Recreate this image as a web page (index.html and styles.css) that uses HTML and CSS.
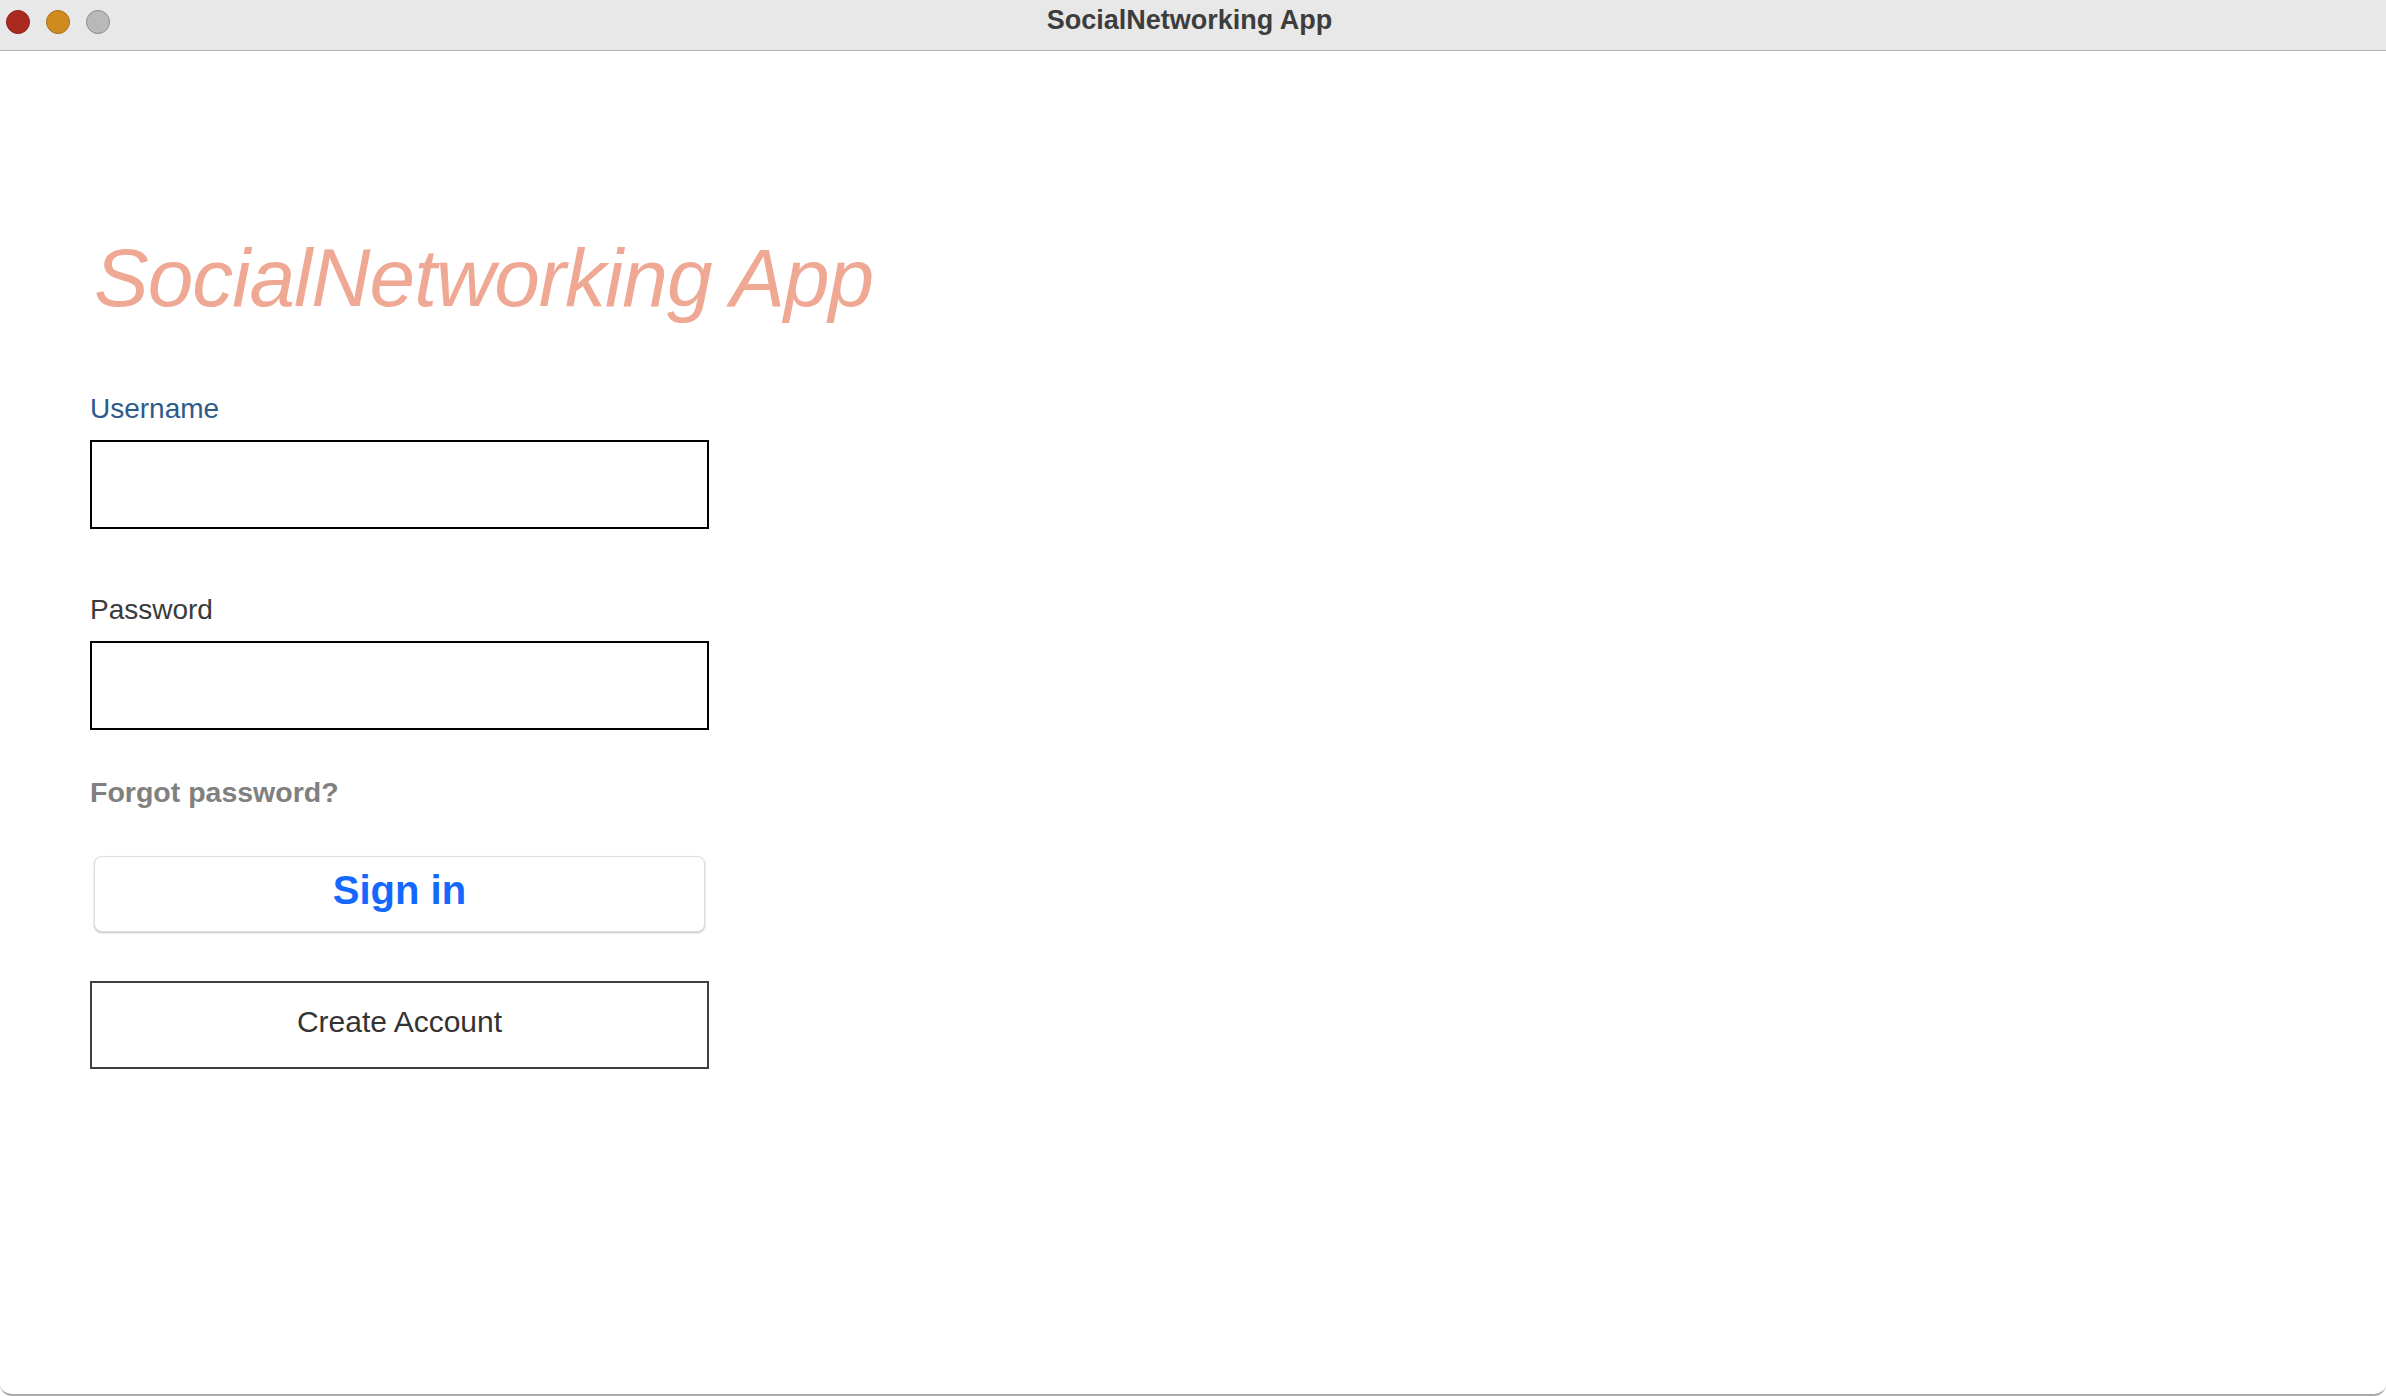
FILE: index.html
```html
<!DOCTYPE html>
<html lang="en">
<head>
<meta charset="utf-8">
<title>SocialNetworking App</title>
<link rel="stylesheet" href="styles.css">
</head>
<body>
<div class="window">
  <header class="titlebar">
    <div class="lights">
      <span class="light light-close"></span>
      <span class="light light-min"></span>
      <span class="light light-max"></span>
    </div>
    <div class="window-title">SocialNetworking App</div>
    <div></div>
  </header>
  <main class="content">
    <h1 class="app-title">SocialNetworking App</h1>
    <form class="login">
      <label class="field-label label-user">Username</label>
      <input class="field" type="text">
      <label class="field-label label-pass">Password</label>
      <input class="field" type="password">
      <a class="forgot">Forgot password?</a>
      <button type="button" class="btn-signin">Sign in</button>
      <button type="button" class="btn-create">Create Account</button>
    </form>
  </main>
</div>
</body>
</html>
```
FILE: styles.css
```css
html, body {
  margin: 0;
  padding: 0;
  background: #ffffff;
}
body {
  font-family: "Liberation Sans", Arial, Helvetica, sans-serif;
  height: 1396px;
  overflow: hidden;
}
.window {
  box-sizing: border-box;
  height: 1396px;
  background: #ffffff;
  border-bottom: 2px solid #a9a9a9;
  border-radius: 0 0 12px 12px;
}
.titlebar {
  height: 50px;
  background: #e8e8e8;
  border-bottom: 1px solid #b3b3b3;
  display: grid;
  grid-template-columns: 1fr auto 1fr;
  align-items: start;
  padding-right: 7px;
}
.lights {
  display: flex;
  gap: 16px;
  padding: 10px 0 0 6px;
}
.light {
  width: 24px;
  height: 24px;
  border-radius: 50%;
  box-sizing: border-box;
  display: block;
}
.light-close { background: #ab2a20; border: 1px solid #8e1f17; }
.light-min { background: #cf8b20; border: 1px solid #a96e14; }
.light-max { background: #b9b9b9; border: 1px solid #8d8d8d; }
.window-title {
  font-size: 27px;
  font-weight: bold;
  line-height: 40px;
  color: #3d3d3d;
}
.content {
  padding-left: 90px;
}
.app-title {
  margin: 186px 0 0 4px;
  font-size: 82px;
  line-height: 82px;
  font-style: italic;
  font-weight: normal;
  letter-spacing: -1px;
  color: #efa893;
}
.login {
  display: flex;
  flex-direction: column;
  align-items: flex-start;
  width: 619px;
}
.field-label {
  font-size: 28px;
  line-height: 30px;
}
.label-user {
  margin-top: 75px;
  color: #2d5a8b;
}
.label-pass {
  margin-top: 66px;
  color: #3b3b3b;
}
.field {
  box-sizing: border-box;
  width: 619px;
  height: 89px;
  margin: 16px 0 0 0;
  border: 2px solid #000000;
  border-radius: 0;
  padding: 0 12px;
  font-size: 26px;
  outline: none;
  background: #ffffff;
}
.forgot {
  margin-top: 47px;
  font-size: 28.5px;
  line-height: 30px;
  font-weight: bold;
  color: #808080;
}
.btn-signin {
  box-sizing: border-box;
  margin: 49px 0 0 4px;
  width: 611px;
  height: 76px;
  background: #ffffff;
  border: 1px solid #dedede;
  border-radius: 8px;
  box-shadow: 0 1px 2px rgba(0, 0, 0, 0.25);
  font-family: inherit;
  font-size: 40px;
  font-weight: bold;
  color: #1568fd;
  padding: 0 0 7px 0;
  display: flex;
  align-items: center;
  justify-content: center;
}
.btn-create {
  box-sizing: border-box;
  margin-top: 49px;
  width: 619px;
  height: 88px;
  background: #ffffff;
  border: 2px solid #404040;
  border-radius: 0;
  font-family: inherit;
  font-size: 30px;
  color: #333333;
  padding: 0 0 7px 0;
  display: flex;
  align-items: center;
  justify-content: center;
}
```
